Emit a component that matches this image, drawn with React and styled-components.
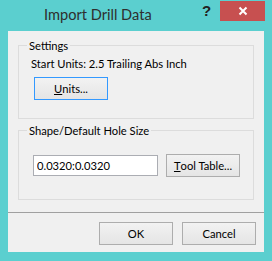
import React from "react";
import styled, { createGlobalStyle } from "styled-components";

const GlobalStyle = createGlobalStyle`
  html, body {
    margin: 0;
    padding: 0;
    background: #5bcfcf;
  }
  body {
    font-family: Lato, "Liberation Sans", sans-serif;
    font-size: 11.2px;
  }
`;

const ImportDrillDialog = () => {
  return (
    <Window>
      <GlobalStyle />
      <TitleBar>
        <Title>Import Drill Data</Title>
        <HelpButton>?</HelpButton>
        <CloseButton>
          <svg width="10" height="10" viewBox="0 0 10 10">
            <path d="M1.5 1.5 L8.5 8.5 M8.5 1.5 L1.5 8.5" stroke="#fff" strokeWidth="2" />
          </svg>
        </CloseButton>
      </TitleBar>
      <Client>
        <Group>
          <Legend>Settings</Legend>
          <StatusText>Start Units: 2.5 Trailing Abs Inch</StatusText>
          <Button width={74} focused style={{ marginLeft: 3 }}>
            <u>U</u>nits...
          </Button>
        </Group>
        <Group second>
          <Legend>Shape/Default Hole Size</Legend>
          <FieldRow>
            <TextBox defaultValue="0.0320:0.0320" />
            <Button width={74}>
              <u>T</u>ool Table...
            </Button>
          </FieldRow>
        </Group>
        <Footer>
          <Button width={74}>OK</Button>
          <Button width={74}>Cancel</Button>
        </Footer>
      </Client>
    </Window>
  );
};

const Window = styled.div`
  width: 272px;
  height: 261px;
  background: #5bcfcf;
  display: flex;
  flex-direction: column;
  box-sizing: border-box;
`;

const TitleBar = styled.div`
  height: 31px;
  display: flex;
  align-items: flex-start;
`;

const Title = styled.div`
  margin-left: 44px;
  padding-top: 5px;
  font-size: 14.6px;
  line-height: 20px;
  color: #2e2e2e;
`;

const HelpButton = styled.div`
  margin-left: auto;
  width: 27px;
  margin-top: 3px;
  text-align: center;
  font-family: "Liberation Sans", sans-serif;
  font-weight: bold;
  font-size: 15px;
  line-height: 16px;
  color: #222;
`;

const CloseButton = styled.div`
  width: 45px;
  height: 20px;
  margin-top: 1px;
  margin-right: 7px;
  background: #c75050;
  display: flex;
  align-items: center;
  justify-content: center;
`;

const Client = styled.div`
  margin: 0 8px;
  width: 256px;
  height: 221px;
  box-sizing: border-box;
  background: #f0f0f0;
  padding-top: 7px;
  display: flex;
  flex-direction: column;
`;

const Group = styled.fieldset`
  margin: ${(props) => (props.second ? "4px" : "0")} 10px 0 10px;
  border: 1px solid #dcdcdc;
  padding: 0 0 ${(props) => (props.second ? "22px" : "18px")} 12px;
  min-width: 0;
`;

const Legend = styled.legend`
  margin-left: -4px;
  padding: 0 2px;
  line-height: 15px;
  color: #000;
`;

const StatusText = styled.div`
  margin-top: 3px;
  line-height: 15px;
  color: #000;
`;

const Button = styled.div`
  box-sizing: border-box;
  width: ${(props) => props.width}px;
  height: 23px;
  margin-top: ${(props) => (props.focused ? "6px" : "0")};
  border: 1px solid ${(props) => (props.focused ? "#3399ff" : "#adadad")};
  background: linear-gradient(#f2f2f2, #e5e5e5);
  display: flex;
  align-items: center;
  justify-content: center;
  color: #000;
  line-height: 15px;
`;

const FieldRow = styled.div`
  margin-top: 16px;
  display: flex;
  align-items: center;
  gap: 8px;
`;

const TextBox = styled.input`
  box-sizing: border-box;
  width: 125px;
  height: 21px;
  margin: 0 0 0 2px;
  padding: 0 3px;
  border: 1px solid #abadb3;
  background: #fff;
  font-family: Lato, "Liberation Sans", sans-serif;
  font-size: 11.2px;
  color: #000;
  outline: none;
`;

const Footer = styled.div`
  margin-top: auto;
  height: 40px;
  box-sizing: border-box;
  border-top: 1px solid #a0a0a0;
  padding: 9px 8px 0 0;
  display: flex;
  justify-content: flex-end;
  gap: 9px;
`;

export default ImportDrillDialog;
